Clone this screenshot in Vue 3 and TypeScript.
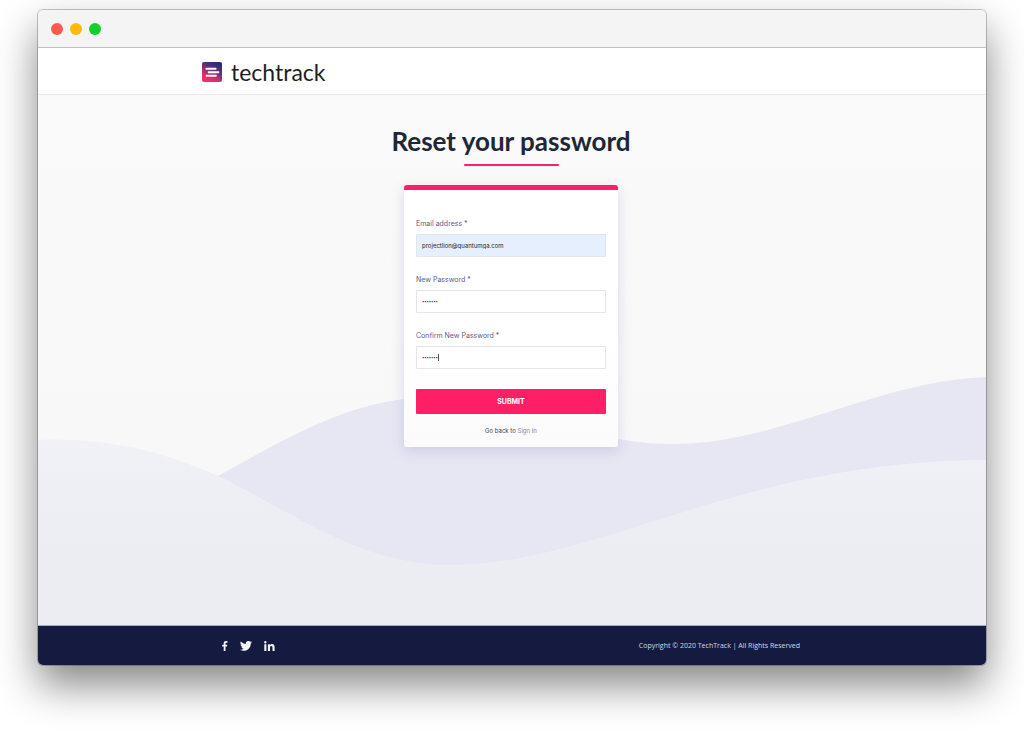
<script setup lang="ts">
import { ref } from 'vue'

interface Field {
  id: string
  label: string
  type: 'email' | 'password'
  value: string
  filled?: boolean
  caret?: boolean
}

const lights: string[] = ['red', 'amber', 'green']

const fields = ref<Field[]>([
  { id: 'email', label: 'Email address *', type: 'email', value: 'projectlion@quantumga.com', filled: true },
  { id: 'password', label: 'New Password *', type: 'password', value: 'abcdefg' },
  { id: 'confirm', label: 'Confirm New Password *', type: 'password', value: 'abcdefg', caret: true },
])
</script>

<template>
  <div class="desktop">
    <div class="window">
      <div class="titlebar">
        <span v-for="light in lights" :key="light" class="light" :class="light"></span>
      </div>

      <header class="header">
        <div class="container">
          <a class="brand" href="#">
            <svg class="brand-mark" viewBox="0 0 20 20" aria-hidden="true">
              <defs>
                <linearGradient id="mark" x1="0.25" y1="1" x2="0.75" y2="0">
                  <stop offset="0" stop-color="#ff2a66" />
                  <stop offset="0.2" stop-color="#e82d69" />
                  <stop offset="0.6" stop-color="#6d2f78" />
                  <stop offset="1" stop-color="#1c2c80" />
                </linearGradient>
              </defs>
              <rect width="20" height="20" rx="2" fill="url(#mark)" />
              <g fill="#fff">
                <rect x="3.7" y="5.8" width="10.6" height="2" rx="0.4" />
                <rect x="5.8" y="9.2" width="11.4" height="2" rx="0.4" />
                <rect x="3.7" y="12.7" width="11" height="2" rx="0.4" />
              </g>
            </svg>
            <span class="brand-name">techtrack</span>
          </a>
        </div>
      </header>

      <main class="main">
        <svg class="waves" viewBox="0 0 948 248" preserveAspectRatio="none" aria-hidden="true">
          <defs>
            <linearGradient id="front" x1="0" y1="0" x2="0" y2="1">
              <stop offset="0" stop-color="#f1f2f8" />
              <stop offset="0.4" stop-color="#edeef3" />
              <stop offset="1" stop-color="#ebedf3" />
            </linearGradient>
          </defs>
          <path fill="#e7e7f3" d="M0 155C70 150 120 130 180 99C235 69 300 29 367 22C470 10 530 67 635 67C740 67 840 4 948 0V248H0Z" />
          <path fill="url(#front)" d="M0 63C60 60 120 72 180 99C250 132 320 188 412 188C560 188 700 84 948 83V248H0Z" />
        </svg>

        <h1 class="title">Reset your password</h1>
        <div class="rule"></div>

        <form class="card" @submit.prevent>
          <div v-for="field in fields" :key="field.id" class="field">
            <label :for="field.id">{{ field.label }}</label>
            <div class="control">
              <input
                :id="field.id"
                v-model="field.value"
                :type="field.type"
                :class="{ filled: field.filled }"
                autocomplete="off"
              />
              <span v-if="field.caret" class="caret"></span>
            </div>
          </div>
          <button type="submit">SUBMIT</button>
          <p class="back">Go back to <a href="#">Sign In</a></p>
        </form>
      </main>

      <footer class="footer">
        <div class="container footer-row">
          <nav class="social" aria-label="Social">
            <a href="#" aria-label="Facebook">
              <svg width="6" height="10" viewBox="0 0 6 10"><path d="M1.7 10V5.5H.2V3.8h1.5V2.5C1.7.9 2.6.1 4 .1c.7 0 1.3.1 1.5.1v1.6h-1c-.8 0-1 .4-1 1v1h1.8L5 5.500H3.500V10Z" /></svg>
            </a>
            <a href="#" aria-label="Twitter">
              <svg width="12" height="10" viewBox="0 0 24 20"><path d="M24 2.4a9.800 9.800 0 0 1-2.800.8A4.900 4.900 0 0 0 23.300.5a9.900 9.900 0 0 1-3.100 1.200 4.900 4.900 0 0 0-8.400 4.500A14 14 0 0 1 1.700 1a4.900 4.900 0 0 0 1.500 6.600A4.900 4.900 0 0 1 1 7a4.900 4.900 0 0 0 3.900 4.900 5 5 0 0 1-2.200.1 4.900 4.900 0 0 0 4.600 3.400A9.900 9.900 0 0 1 0 17.500 13.900 13.900 0 0 0 7.500 19.700c9.100 0 14.300-7.700 14-14.700A10 10 0 0 0 24 2.400Z" /></svg>
            </a>
            <a href="#" aria-label="LinkedIn">
              <svg width="11" height="10" viewBox="0 0 11 10"><path d="M.3 3.300h2.100V10H.3ZM1.350 0a1.200 1.200 0 1 1 0 2.400 1.200 1.200 0 0 1 0-2.400ZM3.900 3.300h2v.9c.4-.7 1.100-1.100 2.100-1.100 2.100 0 2.600 1.300 2.600 3.200V10H8.500V6.700c0-.9-.1-1.800-1.200-1.800S6 5.700 6 6.700V10H3.900Z" /></svg>
            </a>
          </nav>
          <span class="copyright">Copyright © 2020 TechTrack | All Rights Reserved</span>
        </div>
      </footer>
    </div>
  </div>
</template>

<style>
body {
  margin: 0;
  background: #fff;
}
</style>

<style scoped>
.desktop {
  box-sizing: border-box;
  display: flex;
  min-height: 100vh;
  padding: 10px 38px 75px;
  overflow: hidden;
  font-family: Inter, "Liberation Sans", sans-serif;
}

.window {
  flex: 1;
  display: flex;
  flex-direction: column;
  overflow: hidden;
  border-radius: 5px;
  background: #fff;
  box-shadow: 0 0 0 1px rgba(0, 0, 0, 0.22), 0 20px 42px rgba(0, 0, 0, 0.48);
}

.titlebar {
  display: flex;
  align-items: center;
  gap: 7px;
  height: 37px;
  padding: 0 13px;
  border-bottom: 1px solid #bfbfbf;
  background: #f4f4f4;
}

.light {
  width: 12px;
  height: 12px;
  border-radius: 50%;
}

.red {
  background: #ff5c50;
}

.amber {
  background: #ffbb0d;
}

.green {
  background: #0fd02c;
}

.container {
  box-sizing: border-box;
  width: 100%;
  max-width: 620px;
  margin: 0 auto;
}

.header {
  display: flex;
  align-items: center;
  height: 44px;
  padding-top: 2px;
  border-bottom: 1px solid #ebebeb;
  background: #fff;
}

.brand {
  display: flex;
  align-items: center;
  gap: 9px;
  color: #1e1e22;
  text-decoration: none;
}

.brand-mark {
  width: 20px;
  height: 20px;
}

.brand-name {
  font-family: Lato, sans-serif;
  font-size: 23px;
  line-height: 24px;
}

.main {
  position: relative;
  flex: 1;
  display: flex;
  flex-direction: column;
  align-items: center;
  padding: 28px 18px 40px 16px;
  background: linear-gradient(#fafafa, #f7f7f8);
}

.waves {
  position: absolute;
  left: 0;
  bottom: 0;
  width: 100%;
  height: 248px;
}

.title {
  margin: 0;
  color: #1e2735;
  font-family: Lato, sans-serif;
  font-size: 26px;
  font-weight: 700;
  line-height: 36px;
}

.rule {
  width: 95px;
  height: 2px;
  margin: 5px 0 19px;
  border-radius: 1px;
  background: #ff1f66;
}

.card {
  position: relative;
  box-sizing: border-box;
  width: 214px;
  padding: 28px 12px 10px;
  border-top: 5px solid #ff1f66;
  border-radius: 3px;
  background: linear-gradient(#fff 60%, #fbfbfb);
  box-shadow: 0 4px 14px rgba(70, 75, 160, 0.18);
}

.field {
  margin-bottom: 17px;
}

.field label {
  display: block;
  margin-bottom: 4px;
  color: #5a5c8a;
  font-size: 7px;
  line-height: 12px;
}

.control {
  position: relative;
}

.control input {
  display: block;
  box-sizing: border-box;
  width: 100%;
  height: 23px;
  padding: 0 5px;
  border: 1px solid #e3e4ec;
  border-radius: 1px;
  outline: none;
  background: #fff;
  color: #22242c;
  font-family: inherit;
  font-size: 6px;
}

.control input[type="password"] {
  font-size: 4px;
}

.control input.filled {
  background: #e6effe;
}

.caret {
  position: absolute;
  top: 8px;
  left: 22px;
  width: 1px;
  height: 7px;
  background: #55565f;
}

button {
  display: block;
  width: 100%;
  height: 25px;
  margin-top: 20px;
  padding: 0;
  border: 0;
  border-radius: 1px;
  background: #ff1f66;
  color: #fff;
  font-family: inherit;
  font-size: 7px;
  font-weight: 700;
}

.back {
  margin: 11px 0 0;
  color: #3a3d4c;
  font-size: 6px;
  line-height: 12px;
  text-align: center;
}

.back a {
  color: #83869c;
  text-decoration: none;
}

.footer {
  display: flex;
  align-items: center;
  height: 39px;
  border-top: 1px solid #a4aabf;
  background: #141a40;
}

.footer-row {
  display: flex;
  align-items: center;
  justify-content: space-between;
  padding: 0 22px 0 20px;
}

.social {
  display: flex;
  align-items: center;
  gap: 12px;
}

.social a {
  display: flex;
}

.social svg {
  fill: #f3f4f8;
}

.copyright {
  color: #d8dae4;
  font-family: "Open Sans", sans-serif;
  font-size: 7px;
  line-height: 12px;
}
</style>
